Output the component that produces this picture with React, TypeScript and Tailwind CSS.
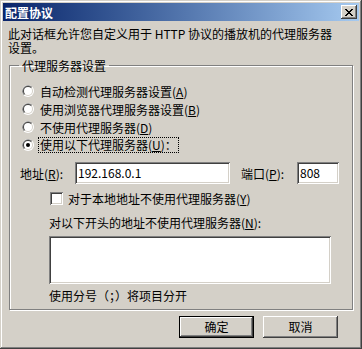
import React from 'react'

const raised =
  'shadow-[inset_-1px_-1px_0_#404040,inset_1px_1px_0_#fff,inset_-2px_-2px_0_#808080,inset_2px_2px_0_#D4D0C8]'

function Radio({ checked }: { checked?: boolean }) {
  return (
    <svg width="12" height="12" viewBox="0 0 12 12" className="shrink-0">
      <circle cx="6" cy="6" r="6" fill="#fff" />
      <path d="M1.76 10.24A6 6 0 0 1 10.24 1.76Z" fill="#808080" />
      <circle cx="6" cy="6" r="5" fill="#D4D0C8" />
      <path d="M2.46 9.54A5 5 0 0 1 9.54 2.46Z" fill="#404040" />
      <circle cx="6" cy="6" r="4" fill="#fff" />
      {checked && <circle cx="6" cy="6" r="2" fill="#000" />}
    </svg>
  )
}

function Key({ k }: { k: string }) {
  return (
    <span>
      (<u className="underline-offset-1">{k}</u>)
    </span>
  )
}

function RadioRow({ label, k, checked, focus, colon }: { label: string; k: string; checked?: boolean; focus?: boolean; colon?: boolean }) {
  return (
    <div className="flex h-[18px] items-center ml-[2px]">
      <Radio checked={checked} />
      <span
        className={
          focus
            ? 'ml-[4px] border border-dotted border-black px-[1px] leading-[14px]'
            : 'ml-[6px] leading-[13px]'
        }
      >
        {label}
        <Key k={k} />
        {colon ? '：' : ''}
      </span>
    </div>
  )
}

function Field({ value, className }: { value?: string; className: string }) {
  return (
    <div
      className={`bg-white shadow-[inset_1px_1px_0_#808080,inset_-1px_-1px_0_#fff,inset_2px_2px_0_#404040,inset_-2px_-2px_0_#D4D0C8] pl-[3px] flex items-center ${className}`}
    >
      {value}
    </div>
  )
}

export default function App() {
  return (
    <div className="w-[362px] h-[349px] bg-[#D4D0C8] p-[3px] text-[12px] text-black font-[family-name:'Noto_Sans_CJK_SC',sans-serif] shadow-[inset_-1px_-1px_0_#404040,inset_1px_1px_0_#D4D0C8,inset_-2px_-2px_0_#808080,inset_2px_2px_0_#fff] select-none">
      {/* title bar */}
      <div className="flex h-[18px] items-center justify-between bg-gradient-to-r from-[#0A246A] to-[#A6CAF0] pl-[2px] pr-[2px]">
        <span className="font-bold text-white leading-[13px]">配置协议</span>
        <button className={`flex h-[14px] w-[16px] items-center justify-center bg-[#D4D0C8] ${raised}`}>
          <svg width="8" height="7" viewBox="0 0 8 7">
            <path d="M0 0h2v1h1v1h2V1h1V0h2v1H7v1H6v1H5v1h1v1h1v1h1v1H6V6H5V5H3v1H2v1H0V6h1V5h1V4h1V3H2V2H1V1H0Z" fill="#000" />
          </svg>
        </button>
      </div>

      <div className="pl-[5px]">
        <p className="mt-[6px] leading-[14px] whitespace-nowrap">
          此对话框允许您自定义用于 HTTP 协议的播放机的代理服务器
          <br />
          设置。
        </p>

        <fieldset className="ml-[1px] mt-[4px] h-[251px] w-[344px] border border-[#808080] pl-[10px] pr-0 pt-0 pb-0 shadow-[1px_1px_0_#fff,inset_1px_1px_0_#fff]">
          <legend className="ml-[-1px] px-[3px] leading-[13px]">代理服务器设置</legend>

          <div className="mt-[10px]">
            <RadioRow label="自动检测代理服务器设置" k="A" />
            <RadioRow label="使用浏览器代理服务器设置" k="B" />
            <RadioRow label="不使用代理服务器" k="D" />
            <RadioRow label="使用以下代理服务器" k="U" checked focus colon />
          </div>

          <div className="mt-[8px] flex h-[22px] items-center">
            <span className="w-[55px] leading-[13px]">
              地址<Key k="R" />:
            </span>
            <Field value="192.168.0.1" className="h-[22px] w-[155px]" />
            <span className="ml-[11px] w-[56px] leading-[13px]">
              端口<Key k="P" />:
            </span>
            <Field value="808" className="h-[22px] w-[42px] pl-[2px]" />
          </div>

          <div className="mt-[8px] ml-[30px] flex h-[13px] items-center">
            <div className="h-[13px] w-[13px] bg-white shadow-[inset_1px_1px_0_#808080,inset_-1px_-1px_0_#fff,inset_2px_2px_0_#404040,inset_-2px_-2px_0_#D4D0C8]" />
            <span className="ml-[5px] leading-[13px]">
              对于本地地址不使用代理服务器<Key k="Y" />
            </span>
          </div>

          <div className="mt-[11px] ml-[29px] leading-[13px]">
            对以下开头的地址不使用代理服务器<Key k="N" />:
          </div>

          <Field className="mt-[7px] ml-[29px] h-[48px] w-[282px]" />

          <div className="mt-[5px] ml-[29px] leading-[13px]">使用分号（；）将项目分开</div>
        </fieldset>
      </div>

      <div className="mt-[6px] flex justify-end gap-[9px] pr-[21px]">
        <button className={`flex h-[22px] w-[75px] items-center justify-center border border-black bg-[#D4D0C8] ${raised}`}>
          确定
        </button>
        <button className={`flex h-[22px] w-[75px] items-center justify-center bg-[#D4D0C8] ${raised}`}>
          取消
        </button>
      </div>
    </div>
  )
}
